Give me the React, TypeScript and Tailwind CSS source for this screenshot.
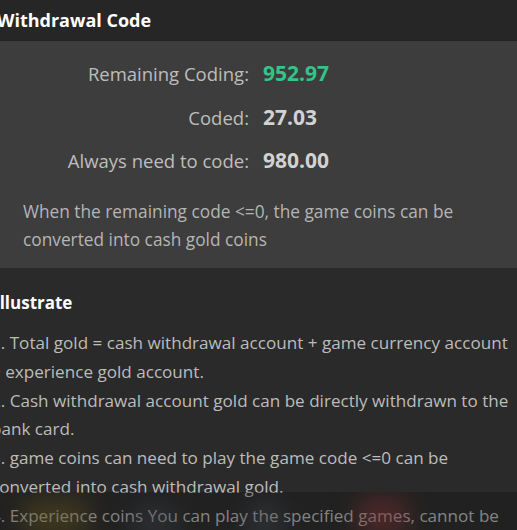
import React from "react";

export default function App() {
  const rows = [
    { label: "Remaining Coding:", value: "952.97", green: true },
    { label: "Coded:", value: "27.03", green: false },
    { label: "Always need to code:", value: "980.00", green: false },
  ];
  const items = [
    "1. Total gold = cash withdrawal account + game currency account + experience gold account.",
    "2. Cash withdrawal account gold can be directly withdrawn to the bank card.",
    "3. game coins can need to play the game code <=0 can be converted into cash withdrawal gold.",
    "4. Experience coins You can play the specified games, cannot be withdrawn directly.",
  ];
  return (
    <div
      className="relative w-[517px] h-[530px] overflow-hidden bg-[#2a2a2a]"
      style={{ fontFamily: '"Open Sans", "Noto Sans", sans-serif' }}
    >
      <div className="-ml-[12px] w-[529px]">
        <div className="h-[41px] bg-[#262626] flex items-center pl-[9px] border-b border-[#222]">
          <span className="text-[18px] font-bold text-white">Withdrawal Code</span>
        </div>
        <div className="bg-[#3d3d3d] h-[227px] pt-[18px]">
          <div className="flex flex-col gap-[14.5px]">
            {rows.map((r) => (
              <div key={r.label} className="grid grid-cols-[261px_1fr] gap-x-[14px] items-center h-[29px] leading-[29px]">
                <span className="text-right text-[18.5px] text-[#bdbdbd]">{r.label}</span>
                <span className={`text-[21px] font-bold ${r.green ? "text-[#34c48a]" : "text-[#d2d2d2]"}`}>{r.value}</span>
              </div>
            ))}
          </div>
          <p className="pl-[35px] pr-[40px] mt-[23px] text-[17.3px] leading-[28px] text-[#b5b5b5]">
            When the remaining code &lt;=0, the game coins can be converted into cash gold coins
          </p>
        </div>
        <div className="pl-[6px] pt-[21px]">
          <h2 className="text-[17px] font-bold text-white leading-[28px]">Illustrate</h2>
          <div className="-ml-[3px] mt-[12px] pr-[4px]">
            {items.map((t) => (
              <p key={t} className="text-[17.1px] leading-[28.8px] text-[#bcbcbc]">{t}</p>
            ))}
          </div>
        </div>
      </div>
      <div className="absolute left-0 right-0 bottom-0 h-[38px] bg-[rgba(15,15,15,0.32)] overflow-hidden">
        <div className="absolute left-[20px] top-[5px] w-[70px] h-[40px] rounded-full bg-[#6a5a1c] opacity-40 blur-[12px]" />
        <div className="absolute left-[130px] top-[10px] w-[50px] h-[40px] rounded-full bg-[#3a4048] opacity-40 blur-[12px]" />
        <div className="absolute left-[245px] top-[10px] w-[40px] h-[40px] rounded-full bg-[#404a52] opacity-40 blur-[12px]" />
        <div className="absolute left-[355px] top-[4px] w-[55px] h-[40px] rounded-full bg-[#7a2f2f] opacity-50 blur-[12px]" />
      </div>
    </div>
  );
}
